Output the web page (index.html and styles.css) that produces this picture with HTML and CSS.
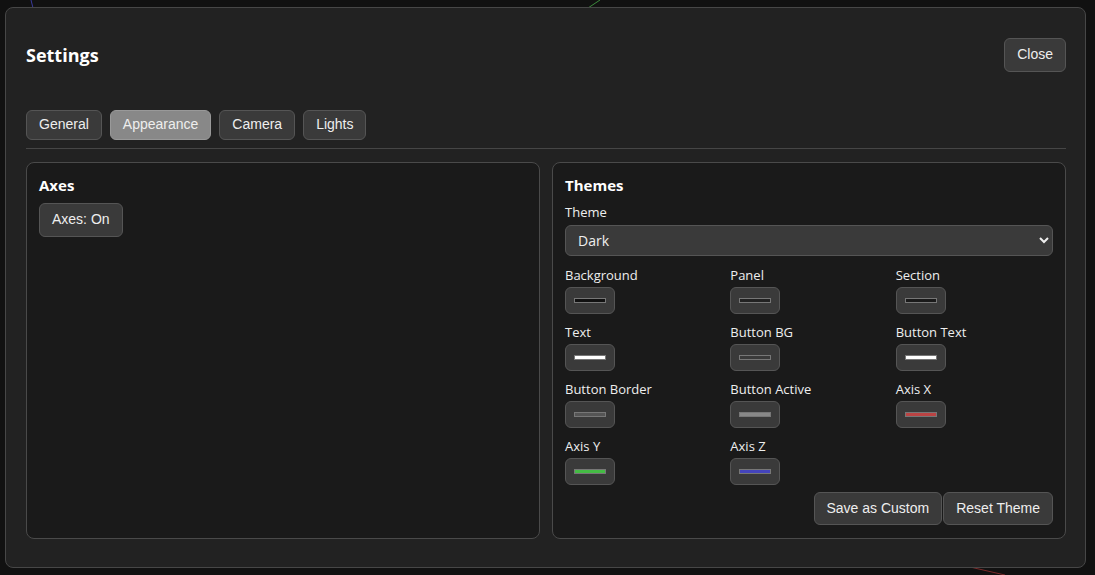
FILE: index.html
```html
<html>
<head>
<link rel="stylesheet" href="styles.css">
</head>
<body>
  <svg class="scene" width="1095" height="575" viewBox="0 0 1095 575">
    <line x1="31" y1="0" x2="33" y2="8" stroke="#3a3a9a" stroke-width="1"/>
    <line x1="588" y1="8" x2="600" y2="0" stroke="#3c8a3c" stroke-width="1"/>
    <line x1="970" y1="567" x2="1005" y2="575" stroke="#7a2a2a" stroke-width="1"/>
  </svg>

  <div class="modal">
    <div class="modal-head">
      <h2 class="title">Settings</h2>
      <button class="btn btn-close" type="button">Close</button>
    </div>

    <div class="tabs">
      <button class="btn tab" type="button">General</button>
      <button class="btn tab active" type="button">Appearance</button>
      <button class="btn tab" type="button">Camera</button>
      <button class="btn tab" type="button">Lights</button>
    </div>

    <div class="panels">
      <div class="section">
        <h3>Axes</h3>
        <button class="btn btn-axes" type="button">Axes: On</button>
      </div>

      <div class="section">
        <h3>Themes</h3>
        <label class="field-label" for="theme">Theme</label>
        <select id="theme" class="select">
          <option>Dark</option>
          <option>Light</option>
        </select>

        <div class="colors">
          <div class="color">
            <label>Background</label>
            <input type="color" value="#111111">
          </div>
          <div class="color">
            <label>Panel</label>
            <input type="color" value="#222222">
          </div>
          <div class="color">
            <label>Section</label>
            <input type="color" value="#1a1a1a">
          </div>
          <div class="color">
            <label>Text</label>
            <input type="color" value="#ffffff">
          </div>
          <div class="color">
            <label>Button BG</label>
            <input type="color" value="#3a3a3a">
          </div>
          <div class="color">
            <label>Button Text</label>
            <input type="color" value="#ffffff">
          </div>
          <div class="color">
            <label>Button Border</label>
            <input type="color" value="#555555">
          </div>
          <div class="color">
            <label>Button Active</label>
            <input type="color" value="#888888">
          </div>
          <div class="color">
            <label>Axis X</label>
            <input type="color" value="#bb4444">
          </div>
          <div class="color">
            <label>Axis Y</label>
            <input type="color" value="#44bb44">
          </div>
          <div class="color">
            <label>Axis Z</label>
            <input type="color" value="#4444bb">
          </div>
        </div>

        <div class="theme-actions">
          <button class="btn" type="button">Save as Custom</button><button class="btn" type="button">Reset Theme</button>
        </div>
      </div>
    </div>
  </div>
</body>
</html>
```

FILE: styles.css
```css
body{
  margin: 0;
  background-color: #111;
  color: #eee;
  font-family: "Segoe UI", "Open Sans", sans-serif;
  overflow: hidden;
}
.scene{
  position: fixed;
  left: 0;
  top: 0;
}
.modal{
  position: relative;
  box-sizing: border-box;
  width: 1081px;
  height: 561px;
  margin: 7px 0 0 5px;
  padding: 30px 19px 28px 20px;
  background-color: #222;
  border: 1px solid #474747;
  border-radius: 8px;
  display: flex;
  flex-direction: column;
}
.modal-head{
  display: flex;
  justify-content: space-between;
  align-items: center;
}
.title{
  margin: 0;
  font-size: 18px;
  font-weight: 700;
  color: #fff;
}
.btn{
  font-family: "Liberation Sans", Arial, sans-serif;
  font-size: 14px;
  line-height: 17px;
  color: #eee;
  background-color: #3a3a3a;
  border: 1px solid #555;
  border-radius: 6px;
  padding: 7px 12px;
  cursor: pointer;
}
.btn-close, .btn-axes{
  padding: 7px 12px 8px;
}
.tabs{
  display: flex;
  gap: 8px;
  margin-top: 38px;
  padding-bottom: 8px;
  border-bottom: 1px solid #464646;
}
.tab{
  padding: 5px 12px 6px;
}
.tab.active{
  background-color: #888;
  border-color: #999;
}
.panels{
  flex: 1;
  display: grid;
  grid-template-columns: 1fr 1fr;
  gap: 12px;
  margin-top: 13px;
}
.section{
  background-color: #1a1a1a;
  border: 1px solid #4a4a4a;
  border-radius: 8px;
  padding: 12px;
  display: flex;
  flex-direction: column;
  align-items: flex-start;
}
.section h3{
  margin: 0 0 8px;
  font-size: 15px;
  line-height: 20px;
  font-weight: 700;
  color: #fff;
}
.field-label, .color label{
  display: block;
  font-size: 13px;
  line-height: 18px;
  color: #eee;
}
.select{
  color-scheme: dark;
  width: 100%;
  height: 31px;
  margin-top: 4px;
  padding: 0 8px;
  font-family: "Segoe UI", "Open Sans", sans-serif;
  font-size: 14px;
  color: #eee;
  background-color: #3a3a3a;
  border: 1px solid #555;
  border-radius: 6px;
}
.colors{
  width: 100%;
  display: grid;
  grid-template-columns: repeat(3, 1fr);
  column-gap: 8px;
  row-gap: 9px;
  margin-top: 10px;
}
.color input{
  box-sizing: border-box;
  display: block;
  width: 50px;
  height: 27px;
  margin: 3px 0 0;
  padding: 6px;
  background-color: #3a3a3a;
  border: 1px solid #555;
  border-radius: 6px;
}
.color input::-webkit-color-swatch-wrapper{
  padding: 4px 2px;
}
.color input::-webkit-color-swatch{
  border: 1px solid #777;
  border-radius: 0;
}
.theme-actions{
  align-self: flex-end;
  display: flex;
  gap: 1px;
  margin-top: 7px;
}
```
